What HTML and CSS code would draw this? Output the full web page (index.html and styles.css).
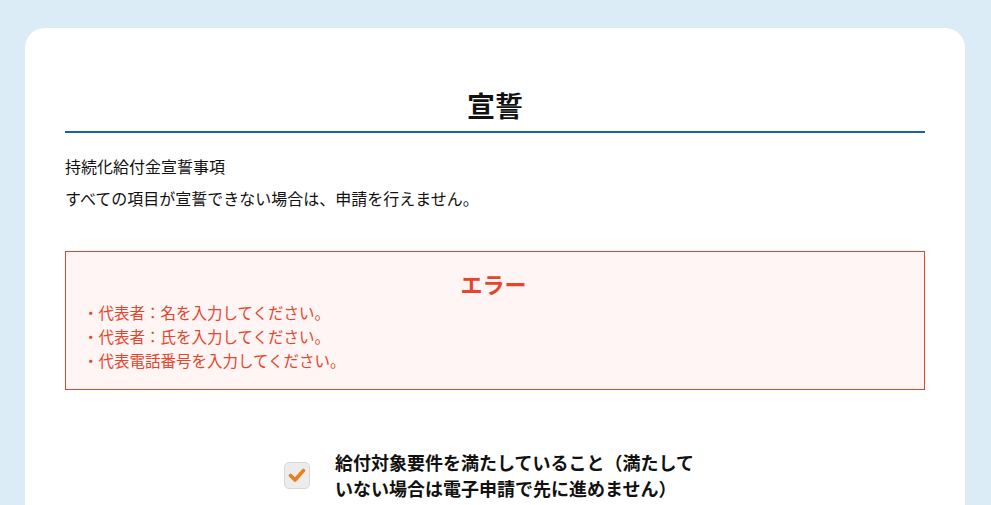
FILE: index.html
```html
<!DOCTYPE html>
<html lang="ja">
<head>
<meta charset="utf-8">
<title>宣誓</title>
<link rel="stylesheet" href="styles.css">
</head>
<body>
<main class="card">
  <h1 class="title">宣誓</h1>
  <p class="lead">持続化給付金宣誓事項</p>
  <p class="note">すべての項目が宣誓できない場合は、申請を行えません。</p>
  <section class="error">
    <h2 class="error-title">エラー</h2>
    <ul class="error-list">
      <li>・代表者：名を入力してください。</li>
      <li>・代表者：氏を入力してください。</li>
      <li>・代表電話番号を入力してください。</li>
    </ul>
  </section>
  <label class="check-row">
    <span class="checkbox">
      <svg viewBox="0 0 20 20" width="20" height="20"><path d="M3.5 10.5 L8 15 L16.5 5.5" fill="none" stroke="#e8801f" stroke-width="3.6" stroke-linecap="round" stroke-linejoin="round"/></svg>
    </span>
    <span class="check-text">給付対象要件を満たしていること（満たしていない場合は電子申請で先に進めません）</span>
  </label>
</main>
</body>
</html>
```

FILE: styles.css
```css
* { box-sizing: border-box; }
html, body { margin: 0; padding: 0; }
body {
  background: #dbecf6;
  font-family: "Noto Sans CJK JP", "Noto Sans", sans-serif;
  color: #111;
  padding: 28px 26px 0 25px;
  height: 505px;
  overflow: hidden;
}
.card {
  background: #fff;
  border-radius: 20px 20px 0 0;
  padding: 62px 40px 40px;
  min-height: 600px;
}
.title {
  margin: 0;
  text-align: center;
  font-size: 28px;
  font-weight: 700;
  line-height: 30px;
  padding-bottom: 11px;
  border-bottom: 2px solid #13659c;
}
.lead {
  margin: 19px 0 0 0;
  font-size: 16px;
  line-height: 28px;
}
.note {
  margin: 4px 0 0 0;
  font-size: 16px;
  line-height: 28px;
}
.error {
  margin-top: 39px;
  border: 1px solid #e8432b;
  background: #fff5f4;
  padding: 16px 20px 17px 17px;
  color: #e8432b;
}
.error-title {
  margin: 0 0 2px;
  text-align: center;
  font-size: 22px;
  font-weight: 700;
  line-height: 30px;
}
.error-list {
  list-style: none;
  margin: 0;
  padding: 0;
  font-size: 15.5px;
  line-height: 24px;
}
.check-row {
  display: flex;
  align-items: center;
  justify-content: center;
  gap: 25px;
  margin-top: 59px;
  padding-right: 7px;
}
.checkbox {
  width: 26px;
  height: 27px;
  flex: none;
  border: 1px solid #d8d8d8;
  border-radius: 5px;
  background: #ececec;
  display: flex;
  align-items: center;
  justify-content: center;
}
.check-text {
  width: 364px;
  font-size: 18px;
  font-weight: 700;
  line-height: 26px;
}
```
